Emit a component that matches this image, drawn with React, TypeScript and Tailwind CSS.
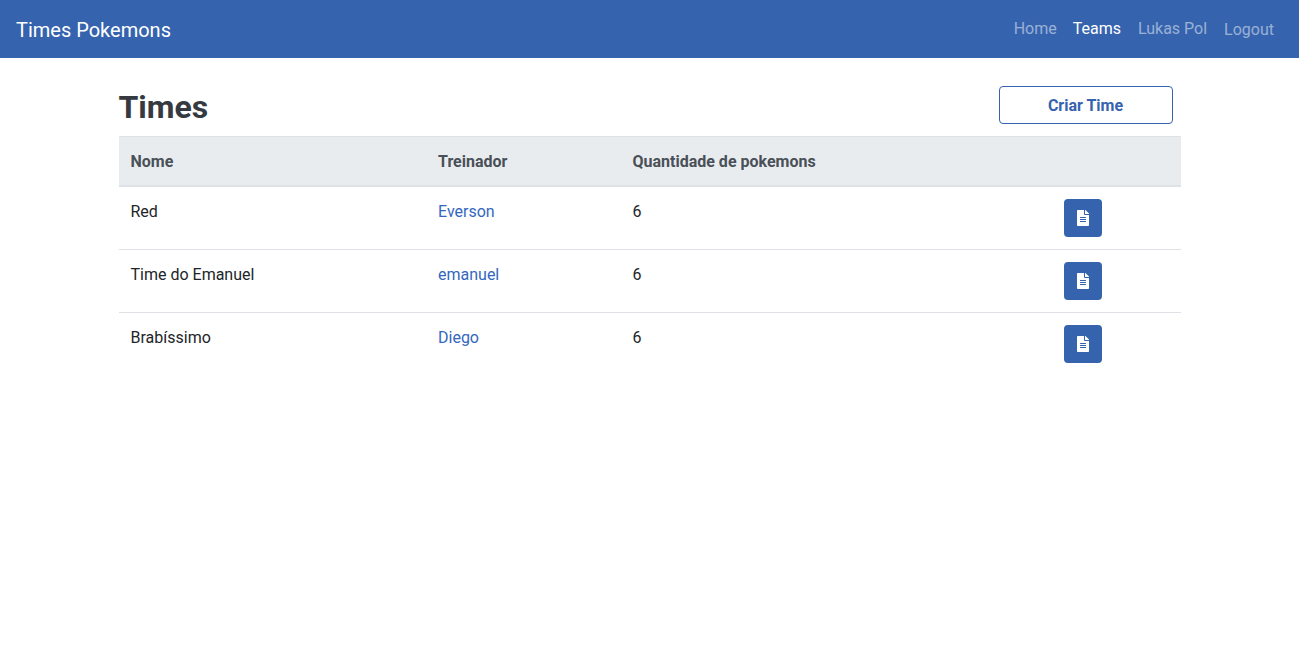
const TEAMS = [
  { name: "Red", trainer: "Everson", count: 6 },
  { name: "Time do Emanuel", trainer: "emanuel", count: 6 },
  { name: "Brabíssimo", trainer: "Diego", count: 6 },
];

function FileIcon() {
  return (
    <svg width="12" height="16" viewBox="0 0 384 512" fill="#fff">
      <path d="M224 136V0H24C10.700 0 0 10.700 0 24v464c0 13.300 10.700 24 24 24h336c13.300 0 24-10.700 24-24V160H248c-13.200 0-24-10.800-24-24zm64 236c0 6.600-5.400 12-12 12H108c-6.600 0-12-5.400-12-12v-8c0-6.600 5.400-12 12-12h168c6.600 0 12 5.400 12 12v8zm0-64c0 6.600-5.400 12-12 12H108c-6.600 0-12-5.400-12-12v-8c0-6.600 5.400-12 12-12h168c6.600 0 12 5.400 12 12v8zm0-72v8c0 6.600-5.400 12-12 12H108c-6.600 0-12-5.400-12-12v-8c0-6.600 5.400-12 12-12h168c6.600 0 12 5.400 12 12zm96-114.100v6.100H256V0h6.100c6.400 0 12.500 2.500 17 7l97.900 98c4.500 4.500 7 10.600 7 16.900z" />
    </svg>
  );
}

export default function App() {
  return (
    <div className="min-h-[662px] bg-white font-['Roboto',sans-serif] text-base leading-6 text-[#212529]">
      <nav className="flex h-[58px] items-center justify-between bg-[#3563ae] pl-4 pr-[17px]">
        <a className="mt-0.5 text-xl leading-[30px] text-white">Times Pokemons</a>
        <div className="flex items-center">
          <a className="px-2 text-white/50">Home</a>
          <a className="pl-2 pr-[9px] text-white">Teams</a>
          <a className="pl-2 pr-[9px] text-white/50">Lukas Pol</a>
          <a className="mt-0.5 px-2 text-white/50">Logout</a>
        </div>
      </nav>

      <main className="mx-auto w-[1062px]">
        <div className="flex h-[78px] items-center justify-between pt-[20px] pr-2">
          <h1 className="text-[32px] font-bold leading-[38px] text-[#343a40]">Times</h1>
          <button className="mb-1 h-[38px] w-[174px] rounded border border-[#3563ae] bg-white pt-px font-bold text-[#3563ae]">
            Criar Time
          </button>
        </div>

        <table className="w-[1062px] table-fixed border-collapse text-left">
          <colgroup>
            <col className="w-[307.500px]" />
            <col className="w-[194.500px]" />
            <col className="w-[431px]" />
            <col className="w-[129px]" />
          </colgroup>
          <thead>
            <tr className="bg-[#e9ecef] text-[#495057]">
              <th className="border-t border-b-2 border-[#dee2e6] px-3 pt-[13px] pb-[11px] font-bold">Nome</th>
              <th className="border-t border-b-2 border-[#dee2e6] px-3 pt-[13px] pb-[11px] font-bold">Treinador</th>
              <th className="border-t border-b-2 border-[#dee2e6] px-3 pt-[13px] pb-[11px] font-bold">Quantidade de pokemons</th>
              <th className="border-t border-b-2 border-[#dee2e6] px-3 pt-[13px] pb-[11px] font-bold"></th>
            </tr>
          </thead>
          <tbody>
            {TEAMS.map((t, i) => (
              <tr key={t.name}>
                <td className={`px-3 pt-[13px] pb-[11px] align-top ${i > 0 ? "border-t border-[#dee2e6]" : ""}`}>{t.name}</td>
                <td className={`px-3 pt-[13px] pb-[11px] align-top text-[#3367bf] ${i > 0 ? "border-t border-[#dee2e6]" : ""}`}>{t.trainer}</td>
                <td className={`px-3 pt-[13px] pb-[11px] align-top ${i > 0 ? "border-t border-[#dee2e6]" : ""}`}>{t.count}</td>
                <td className={`p-3 align-top ${i > 0 ? "border-t border-[#dee2e6]" : ""}`}>
                  <button className="flex h-[38px] w-[38px] items-center justify-center rounded bg-[#3563ae]">
                    <FileIcon />
                  </button>
                </td>
              </tr>
            ))}
          </tbody>
        </table>
      </main>
    </div>
  );
}
